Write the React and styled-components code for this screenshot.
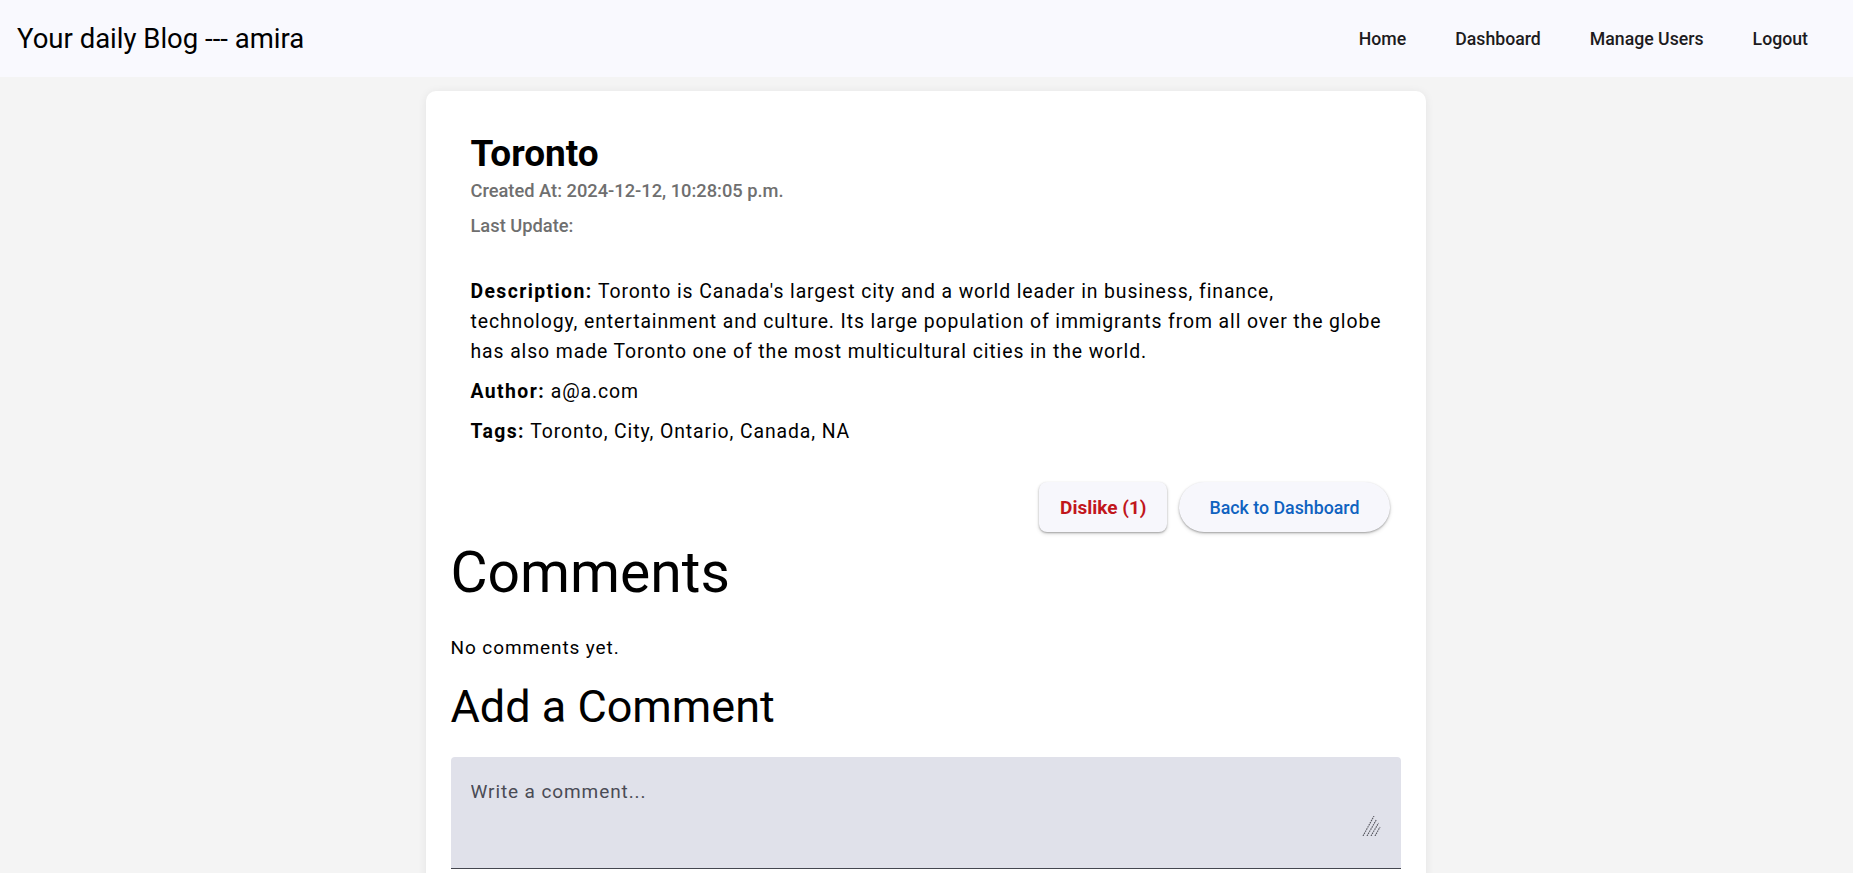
import React from "react";
import styled, { createGlobalStyle } from "styled-components";

const GlobalStyle = createGlobalStyle`
  html, body {
    margin: 0;
    padding: 0;
    overflow: hidden;
  }
  body {
    background: #f4f4f4;
    font-family: Roboto, "Noto Sans", "Liberation Sans", sans-serif;
    color: #000;
  }
  * { box-sizing: border-box; }
`;

const Header = styled.header`
  display: flex;
  align-items: center;
  justify-content: space-between;
  height: 77px;
  padding: 0 45px 0 17px;
  background: #f9f9fe;
`;

const Brand = styled.div`
  font-size: 27.5px;
  font-weight: 400;
  color: #000;
`;

const Nav = styled.nav`
  display: flex;
  gap: 49px;
`;

const NavLink = styled.a`
  font-size: 17.7px;
  font-weight: 500;
  color: #1d1b20;
  text-decoration: none;
  cursor: pointer;
`;

const Main = styled.main`
  padding: 14px 2px 0 0;
`;

const Card = styled.section`
  width: 1000px;
  margin: 0 auto;
  background: #fff;
  border-radius: 10px;
  padding: 25px;
  box-shadow: 0 1px 10px rgba(0, 0, 0, 0.07);
`;

const Post = styled.article`
  padding: 20px 18px 20px 20px;
  display: flex;
  flex-direction: column;
`;

const Title = styled.h1`
  margin: 0 0 6px;
  font-size: 37px;
  line-height: 36px;
  font-weight: 700;
`;

const MetaGroup = styled.div`
  display: flex;
  flex-direction: column;
  gap: 9px;
  margin-bottom: 38px;
`;

const Meta = styled.p`
  margin: 0;
  font-size: 18.3px;
  line-height: 26px;
  font-weight: 500;
  color: #6f6f6f;
`;

const Fields = styled.div`
  display: flex;
  flex-direction: column;
  gap: 10px;
`;

const Field = styled.p`
  margin: 0;
  font-size: 19.4px;
  line-height: 30px;
  letter-spacing: 0.9px;
  color: #000;
`;

const Label = styled.strong`
  font-weight: 700;
  letter-spacing: 1.4px;
`;

const ButtonRow = styled.div`
  display: flex;
  justify-content: flex-end;
  gap: 12px;
  padding-right: 11px;
  margin-top: 15px;
`;

const Button = styled.button`
  height: 50px;
  padding: 0 ${(p) => (p.$pill ? "30px" : "21px")};
  border: none;
  border-radius: ${(p) => (p.$pill ? "25px" : "8px")};
  background: #f7f7fc;
  color: ${(p) => p.$color};
  font-family: inherit;
  font-size: ${(p) => (p.$bold ? "19px" : "17.8px")};
  font-weight: ${(p) => (p.$bold ? 700 : 500)};
  box-shadow: 0 1px 2px rgba(0, 0, 0, 0.3), 0 2px 4px rgba(0, 0, 0, 0.12);
  cursor: pointer;
`;

const SectionHeading = styled.h2`
  margin: ${(p) => p.$top}px 0 0;
  font-size: ${(p) => p.$size}px;
  line-height: 1.2;
  font-weight: 400;
`;

const Empty = styled.p`
  margin: 26px 0 0;
  font-size: 19px;
  line-height: 30px;
  letter-spacing: 0.9px;
`;

const TextField = styled.div`
  position: relative;
  margin-top: 23px;
  background: #e0e1ea;
  border-radius: 4px 4px 0 0;
  border-bottom: 1px solid #44464f;
  padding: 20px 20px 31px 20px;
`;

const TextArea = styled.textarea`
  display: block;
  width: 100%;
  height: 60px;
  border: none;
  outline: none;
  background: transparent;
  resize: none;
  padding: 0;
  font-family: inherit;
  font-size: 19px;
  line-height: 30px;
  letter-spacing: 0.9px;
  color: #1d1b20;

  &::placeholder {
    color: #4a4b55;
  }
`;

const Grip = styled.svg`
  position: absolute;
  right: 20px;
  bottom: 32px;
  width: 19px;
  height: 20px;
  pointer-events: none;
`;

const Submit = styled.button`
  margin-top: 16px;
  height: 44px;
  padding: 0 24px;
  border: none;
  border-radius: 22px;
  background: #415f91;
  color: #fff;
  font-family: inherit;
  font-size: 16px;
  font-weight: 500;
`;

export default function App() {
  return (
    <>
      <GlobalStyle />
      <Header>
        <Brand>Your daily Blog --- amira</Brand>
        <Nav>
          <NavLink>Home</NavLink>
          <NavLink>Dashboard</NavLink>
          <NavLink>Manage Users</NavLink>
          <NavLink>Logout</NavLink>
        </Nav>
      </Header>
      <Main>
        <Card>
          <Post>
            <Title>Toronto</Title>
            <MetaGroup>
              <Meta>Created At: 2024-12-12, 10:28:05 p.m.</Meta>
              <Meta>Last Update:</Meta>
            </MetaGroup>
            <Fields>
              <Field>
                <Label>Description:</Label> Toronto is Canada's largest city and a world leader in
                business, finance, technology, entertainment and culture. Its large population of
                immigrants from all over the globe has also made Toronto one of the most
                multicultural cities in the world.
              </Field>
              <Field>
                <Label>Author:</Label> a@a.com
              </Field>
              <Field>
                <Label>Tags:</Label> Toronto, City, Ontario, Canada, NA
              </Field>
            </Fields>
          </Post>
          <ButtonRow>
            <Button $color="#c1161c" $bold>
              Dislike (1)
            </Button>
            <Button $color="#0f62c0" $pill>
              Back to Dashboard
            </Button>
          </ButtonRow>
          <SectionHeading $size={57} $top={7}>
            Comments
          </SectionHeading>
          <Empty>No comments yet.</Empty>
          <SectionHeading $size={45} $top={17}>
            Add a Comment
          </SectionHeading>
          <TextField>
            <TextArea placeholder="Write a comment..." />
            <Grip viewBox="0 0 19 20" aria-hidden="true">
              <g stroke="#55565e" strokeWidth="1.1" strokeDasharray="1.6 0.8" fill="none">
                <line x1="1" y1="20" x2="12" y2="0" />
                <line x1="5" y1="20" x2="14.5" y2="3.5" />
                <line x1="9" y1="20" x2="16.5" y2="7" />
                <line x1="13" y1="20" x2="18" y2="11" />
              </g>
            </Grip>
          </TextField>
          <Submit>Submit</Submit>
        </Card>
      </Main>
    </>
  );
}
